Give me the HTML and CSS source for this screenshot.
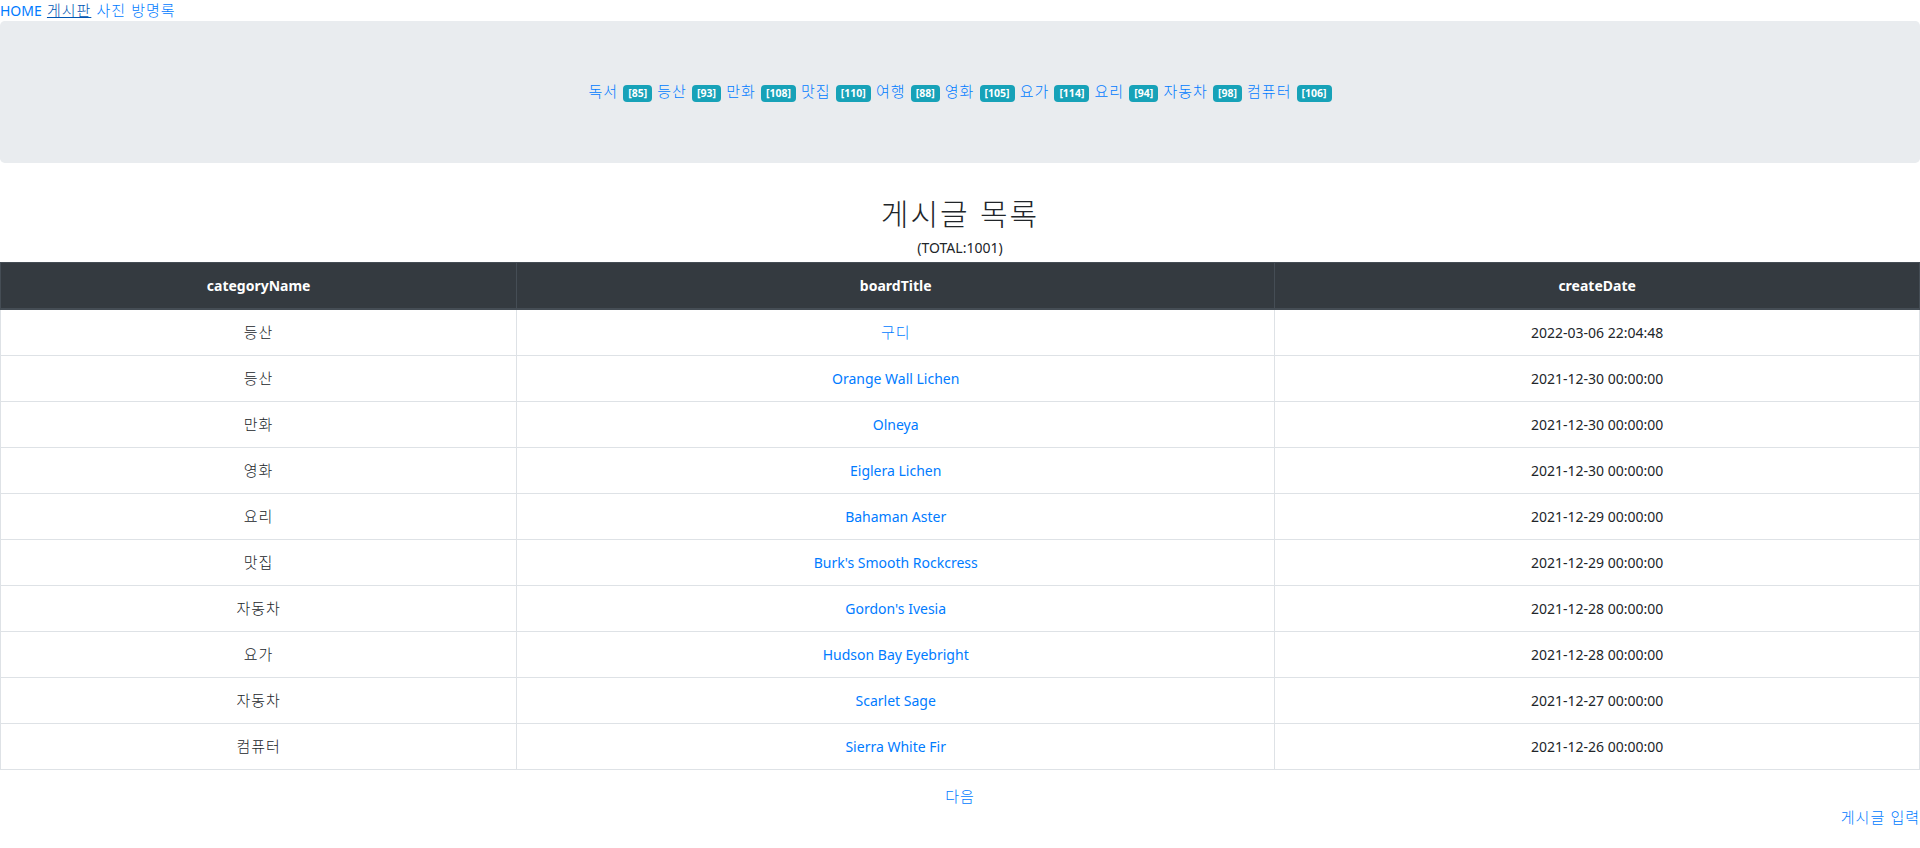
FILE: index.html
```html
<!DOCTYPE html>
<html lang="ko">
<head>
<meta charset="utf-8">
<title>게시글 목록</title>
<link rel="stylesheet" href="styles.css">
</head>
<body>
<nav class="topnav">
  <a href="#" class="nav-link">HOME</a>
  <a href="#" class="nav-link active ko">게시판</a>
  <a href="#" class="nav-link ko">사진</a>
  <a href="#" class="nav-link ko">방명록</a>
</nav>
<div class="jumbotron">
  <div class="cats">
    <a href="#" class="ko">독서</a> <span class="badge">[85]</span>
    <a href="#" class="ko">등산</a> <span class="badge">[93]</span>
    <a href="#" class="ko">만화</a> <span class="badge">[108]</span>
    <a href="#" class="ko">맛집</a> <span class="badge">[110]</span>
    <a href="#" class="ko">여행</a> <span class="badge">[88]</span>
    <a href="#" class="ko">영화</a> <span class="badge">[105]</span>
    <a href="#" class="ko">요가</a> <span class="badge">[114]</span>
    <a href="#" class="ko">요리</a> <span class="badge">[94]</span>
    <a href="#" class="ko">자동차</a> <span class="badge">[98]</span>
    <a href="#" class="ko">컴퓨터</a> <span class="badge">[106]</span>
  </div>
</div>
<h2 class="title">게시글 목록</h2>
<div class="total">(TOTAL:1001)</div>
<table class="board">
  <colgroup>
    <col class="c1"><col class="c2"><col class="c3">
  </colgroup>
  <thead>
    <tr><th>categoryName</th><th>boardTitle</th><th>createDate</th></tr>
  </thead>
  <tbody>
    <tr><td><span class="ko">등산</span></td><td><a href="#" class="ko">구디</a></td><td>2022-03-06 22:04:48</td></tr>
    <tr><td><span class="ko">등산</span></td><td><a href="#">Orange Wall Lichen</a></td><td>2021-12-30 00:00:00</td></tr>
    <tr><td><span class="ko">만화</span></td><td><a href="#">Olneya</a></td><td>2021-12-30 00:00:00</td></tr>
    <tr><td><span class="ko">영화</span></td><td><a href="#">Eiglera Lichen</a></td><td>2021-12-30 00:00:00</td></tr>
    <tr><td><span class="ko">요리</span></td><td><a href="#">Bahaman Aster</a></td><td>2021-12-29 00:00:00</td></tr>
    <tr><td><span class="ko">맛집</span></td><td><a href="#">Burk's Smooth Rockcress</a></td><td>2021-12-29 00:00:00</td></tr>
    <tr><td><span class="ko">자동차</span></td><td><a href="#">Gordon's Ivesia</a></td><td>2021-12-28 00:00:00</td></tr>
    <tr><td><span class="ko">요가</span></td><td><a href="#">Hudson Bay Eyebright</a></td><td>2021-12-28 00:00:00</td></tr>
    <tr><td><span class="ko">자동차</span></td><td><a href="#">Scarlet Sage</a></td><td>2021-12-27 00:00:00</td></tr>
    <tr><td><span class="ko">컴퓨터</span></td><td><a href="#">Sierra White Fir</a></td><td>2021-12-26 00:00:00</td></tr>
  </tbody>
</table>
<div class="pager"><a href="#" class="ko">다음</a></div>
<div class="write"><a href="#" class="ko">게시글 입력</a></div>
</body>
</html>
```

FILE: styles.css
```css
html, body {
  margin: 0;
  padding: 0;
}
body {
  font-family: "Noto Sans", "Noto Sans CJK KR", sans-serif;
  font-size: 14px;
  line-height: 21px;
  color: #212529;
  background: #fff;
}
a {
  color: #007bff;
  text-decoration: none;
}
.ko {
  font-family: "Noto Sans CJK KR", sans-serif;
  font-size: 15px;
  font-weight: 300;
  line-height: 15px;
  letter-spacing: 1px;
}
.topnav {
  height: 21px;
  word-spacing: 1.5px;
}
.nav-link.active {
  color: #0056b3;
  text-decoration: underline;
}
.jumbotron {
  background: #e9ecef;
  border-radius: 4.8px;
  padding: 60px 32px 61px;
  margin-bottom: 31px;
  text-align: center;
}
.cats {
  height: 21px;
  word-spacing: 1.5px;
}
.badge {
  display: inline-block;
  background: #17a2b8;
  color: #fff;
  font-size: 10.5px;
  font-weight: 700;
  line-height: 1;
  padding: 3px 5px;
  border-radius: 4px;
  vertical-align: 0;
  word-spacing: 0;
}
.title {
  margin: 0;
  font-family: "Noto Sans CJK KR", sans-serif;
  font-size: 30px;
  font-weight: 300;
  letter-spacing: 2px;
  line-height: 36px;
  text-align: center;
}
.total {
  text-align: center;
  margin: 7px 0 4px;
}
.board {
  width: 100%;
  border-collapse: collapse;
  border: 1px solid #dee2e6;
  margin-bottom: 16px;
}
.board .c1 { width: 26.9%; }
.board .c2 { width: 39.5%; }
.board .c3 { width: 33.6%; }
.board th,
.board td {
  height: 21px;
  padding: 12px;
  text-align: center;
  vertical-align: top;
  border: 1px solid #dee2e6;
}
.board th {
  background: #343a40;
  color: #fff;
  font-weight: 700;
  border-color: #454d55;
  border-bottom-width: 2px;
}
.pager,
.write {
  height: 21px;
}
.pager {
  text-align: center;
}
.write {
  text-align: right;
}
```
